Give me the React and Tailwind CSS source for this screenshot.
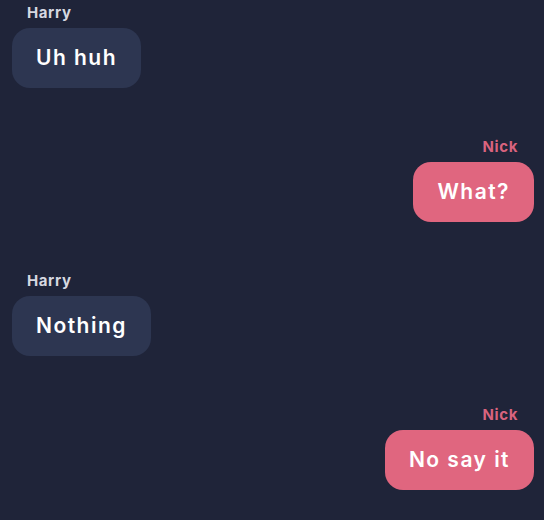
import React from "react";

const messages = [
  { from: "Harry", text: "Uh huh" },
  { from: "Nick", text: "What?" },
  { from: "Harry", text: "Nothing" },
  { from: "Nick", text: "No say it" },
];

function Message({ from, text }) {
  const mine = from === "Nick";
  return (
    <div className={mine ? "flex flex-col items-end" : "flex flex-col items-start"}>
      <span
        className={
          mine
            ? "pr-4 text-[15px] leading-5 font-bold tracking-[0.04em] text-[#d9637e]"
            : "pl-[15px] text-[15px] leading-5 font-bold tracking-[0.04em] text-[#d6d8e0]"
        }
      >
        {from}
      </span>
      <div
        className={
          mine
            ? "mt-[5px] h-[60px] flex items-center px-6 rounded-[18px] bg-[#e0667f] text-white text-[21px] font-semibold tracking-[0.07em]"
            : "mt-[5px] h-[60px] flex items-center px-6 rounded-[18px] bg-[#2d3651] text-white text-[21px] font-semibold tracking-[0.07em]"
        }
      >
        {text}
      </div>
    </div>
  );
}

export default function App() {
  return (
    <div
      className="w-[544px] h-[520px] overflow-hidden bg-[#1f2439] pl-3 pr-[10px] pt-[3px] flex flex-col gap-[49px]"
      style={{ fontFamily: "Inter, 'Noto Sans', sans-serif" }}
    >
      {messages.map((m, i) => (
        <Message key={i} {...m} />
      ))}
    </div>
  );
}
